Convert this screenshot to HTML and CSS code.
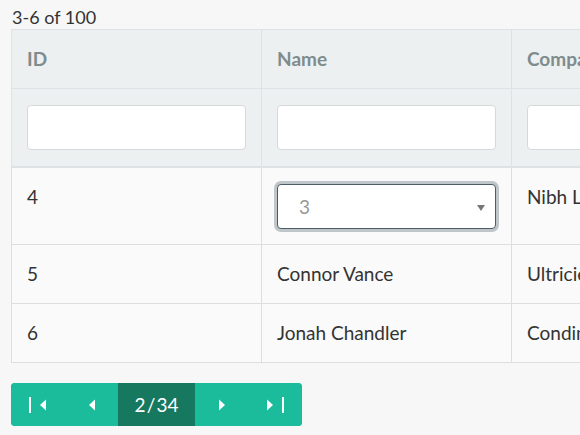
FILE: index.html
```html
<!DOCTYPE html>
<html lang="en">
<head>
    <meta charset="UTF-8">
    <title>Table</title>
    <link rel="stylesheet" href="styles.css">
</head>
<body>
    <div class="page">
        <div class="summary">3-6 of 100</div>

        <table class="grid">
            <thead>
                <tr class="head-row">
                    <th>ID</th>
                    <th>Name</th>
                    <th>Company</th>
                </tr>
                <tr class="filter-row">
                    <th><input type="text" class="filter"></th>
                    <th><input type="text" class="filter"></th>
                    <th><input type="text" class="filter"></th>
                </tr>
            </thead>
            <tbody>
                <tr>
                    <td>4</td>
                    <td>
                        <div class="select">
                            <span>3</span>
                            <svg class="caret" width="8" height="6" viewBox="0 0 8 6"><path d="M0 0h8L4 6z" fill="#777"/></svg>
                        </div>
                    </td>
                    <td>Nibh Lorem Institute</td>
                </tr>
                <tr>
                    <td>5</td>
                    <td>Connor Vance</td>
                    <td>Ultricies Corporation</td>
                </tr>
                <tr>
                    <td>6</td>
                    <td>Jonah Chandler</td>
                    <td>Condimentum Ltd</td>
                </tr>
            </tbody>
        </table>

        <!-- pager -->
        <div class="pager">
            <button class="pg-btn">
                <svg width="18" height="16" viewBox="0 0 18 16"><rect x="0" y="0" width="2" height="16" fill="#fff"/><path d="M17 2.5v11L11 8z" fill="#fff"/></svg>
            </button>
            <button class="pg-btn">
                <svg width="8" height="12" viewBox="0 0 8 12"><path d="M7 0.5v11L1 6z" fill="#fff"/></svg>
            </button>
            <div class="pg-current">2&#8202;/&#8202;34</div>
            <button class="pg-btn">
                <svg width="8" height="12" viewBox="0 0 8 12"><path d="M1 0.5v11L7 6z" fill="#fff"/></svg>
            </button>
            <button class="pg-btn">
                <svg width="18" height="16" viewBox="0 0 18 16"><path d="M1 2.5v11L7 8z" fill="#fff"/><rect x="16" y="0" width="2" height="16" fill="#fff"/></svg>
            </button>
        </div>
    </div>
</body>
</html>
```

FILE: styles.css
```css
html, body {
    margin: 0;
    padding: 0;
    height: 100%;
    overflow: hidden;
}

body {
    background-color: #f7f7f7;
    font-family: Lato, "Open Sans", sans-serif;
    font-size: 18px;
    color: #333;
}

.page {
    padding: 5px 0 0 11px;
}

.summary {
    line-height: 24px;
    padding-left: 1px;
}

.grid {
    border-collapse: collapse;
    table-layout: fixed;
    width: 750px;
    background-color: #fafafa;
    font-size: 19px;
}

.grid th,
.grid td {
    width: 219px;
    border: 1px solid #dcdfe0;
    padding: 16px 15px;
    line-height: 26px;
    text-align: left;
    vertical-align: top;
    white-space: nowrap;
    overflow: hidden;
}

.grid thead th {
    background-color: #ecf0f1;
    border-color: #dde3e4;
}

.head-row th {
    color: #7f8c8d;
    font-weight: bold;
}

.filter-row th {
    border-bottom: 2px solid #e2e6e7;
}

.filter {
    display: block;
    box-sizing: border-box;
    width: 219px;
    height: 45px;
    margin: 0;
    background-color: #fff;
    border: 1px solid #d5d9da;
    border-radius: 4px;
}

.select {
    box-sizing: border-box;
    width: 219px;
    height: 45px;
    margin-bottom: -1px;
    display: flex;
    align-items: center;
    justify-content: space-between;
    padding: 0 10px 0 21px;
    background-color: #fff;
    border: 1px solid #4e5c66;
    border-radius: 4px;
    box-shadow: 0 0 0 3px #bfc6ca;
    color: #999;
}

.caret {
    margin-top: 2px;
}

.grid td {
    color: #333;
}

.pager {
    display: inline-flex;
    margin-top: 20px;
    height: 43px;
    background-color: #1abc9c;
    border-radius: 4px;
    overflow: hidden;
}

.pg-btn {
    width: 53px;
    height: 43px;
    border: none;
    background-color: #1abc9c;
    display: flex;
    align-items: center;
    justify-content: center;
    padding: 0;
    cursor: pointer;
}

.pg-btn:first-child,
.pg-btn:last-child {
    width: 54px;
}

.pg-current {
    width: 77px;
    display: flex;
    align-items: center;
    justify-content: center;
    background-color: #16785f;
    color: #fff;
    font-size: 19px;
}
```
